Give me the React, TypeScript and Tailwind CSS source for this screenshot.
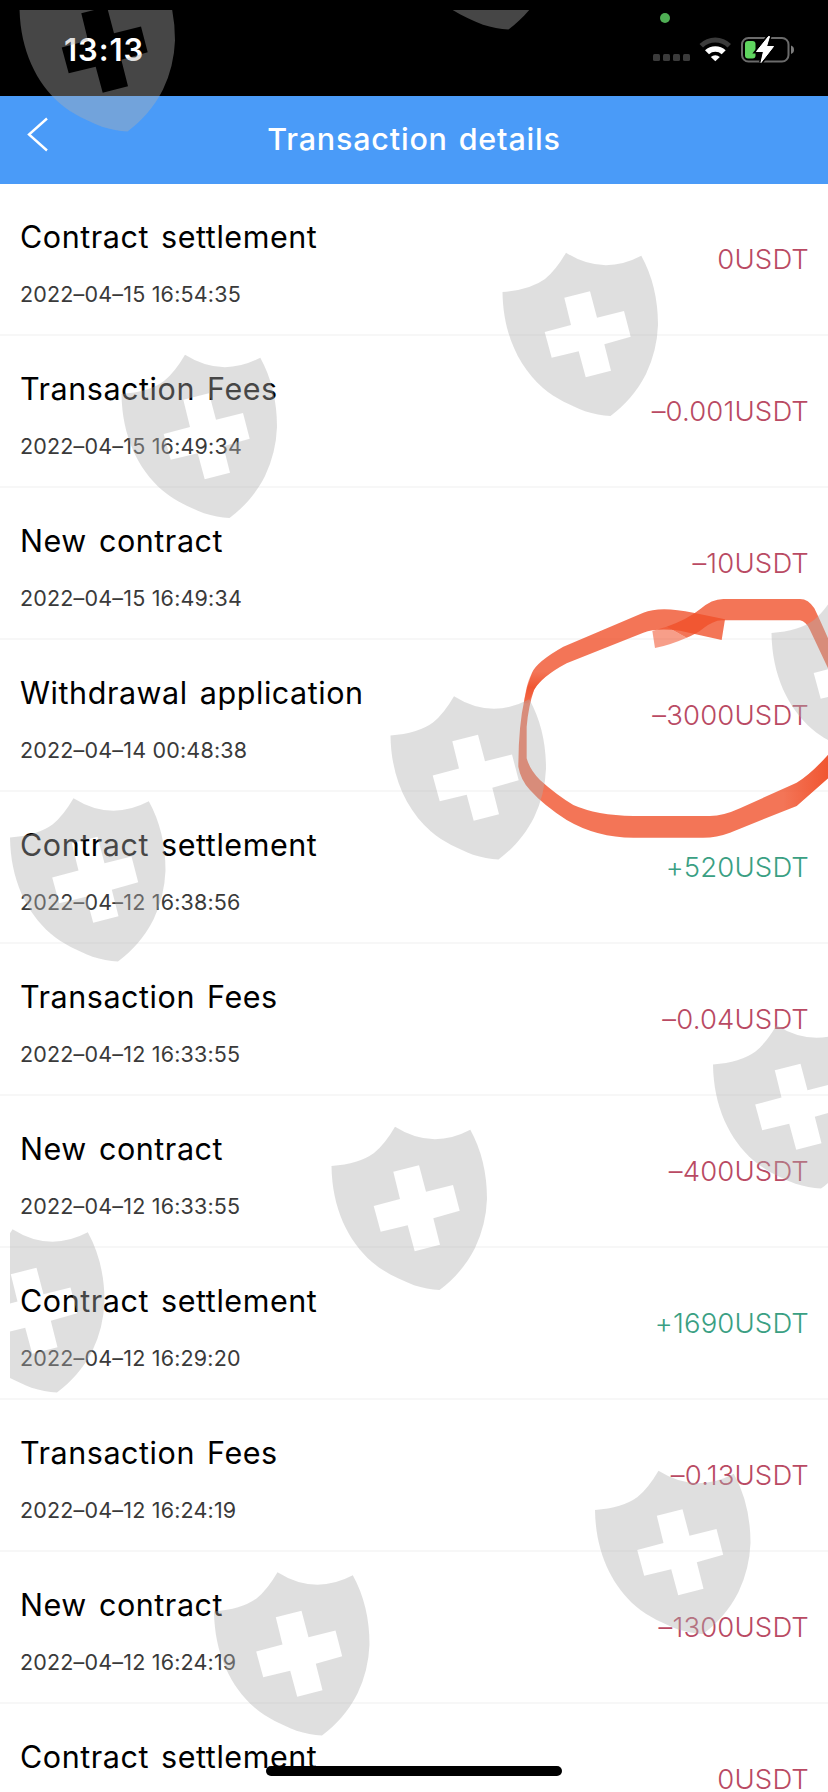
import clsx from "clsx";

interface Transaction {
  title: string;
  date?: string;
  amount: string;
}

const transactions: Transaction[] = [
  { title: "Contract settlement", date: "2022–04–15 16:54:35", amount: "0USDT" },
  { title: "Transaction Fees", date: "2022–04–15 16:49:34", amount: "–0.001USDT" },
  { title: "New contract", date: "2022–04–15 16:49:34", amount: "–10USDT" },
  { title: "Withdrawal application", date: "2022–04–14 00:48:38", amount: "–3000USDT" },
  { title: "Contract settlement", date: "2022–04–12 16:38:56", amount: "+520USDT" },
  { title: "Transaction Fees", date: "2022–04–12 16:33:55", amount: "–0.04USDT" },
  { title: "New contract", date: "2022–04–12 16:33:55", amount: "–400USDT" },
  { title: "Contract settlement", date: "2022–04–12 16:29:20", amount: "+1690USDT" },
  { title: "Transaction Fees", date: "2022–04–12 16:24:19", amount: "–0.13USDT" },
  { title: "New contract", date: "2022–04–12 16:24:19", amount: "–1300USDT" },
  { title: "Contract settlement", amount: "0USDT" },
];

const shields = [
  [19, -32.5],
  [400, -134.5],
  [502, 252],
  [121, 354],
  [771, 593],
  [390, 695.5],
  [9.5, 797.5],
  [712.5, 1024.5],
  [331, 1126],
  [-51.5, 1228.5],
  [594.5, 1470],
  [213.5, 1571.5],
];

function StatusBar() {
  return (
    <div className="flex h-24 shrink-0 items-start justify-between bg-black pl-16 pr-[34px]">
      <span className="mt-[32px] text-[31px] font-semibold leading-9 tracking-[0.9px] text-white">13:13</span>
      <svg className="h-24 w-[142px]" viewBox="652 0 142 96" fill="none">
        <circle cx="665" cy="18" r="5" fill="#4fae54" />
        <g fill="#3b3b3b">
          <rect x="653" y="54" width="7" height="7" rx="1.5" />
          <rect x="663" y="54" width="7" height="7" rx="1.5" />
          <rect x="673" y="54" width="7" height="7" rx="1.5" />
          <rect x="683" y="54" width="7" height="7" rx="1.5" />
        </g>
        <path d="M699.5 44L703 47.5A17.500 17.500 0 0 1 727.500 47.5L731 44A22.500 22.500 0 0 0 699.5 44Z" fill="#3b3b3b" />
        <path d="M705 50.300L709 54.200A9.500 9.500 0 0 1 721.700 54.200L725.700 50.300A15 15 0 0 0 705 50.300Z" fill="#fff" />
        <path d="M710.800 57A6.500 6.500 0 0 1 719.800 57L715.300 61.300Z" fill="#fff" />
        <rect x="742" y="38" width="46.500" height="23.500" rx="6.500" stroke="#6b6b6b" strokeWidth="2" />
        <path d="M791 45.500Q794 46.500 794 49.700T791 54Z" fill="#7c7c7c" />
        <rect x="745" y="41" width="10.500" height="17.500" rx="3" fill="#5fd55f" />
        <path d="M768.500 36.500L756.500 51.500H763.500L761 62.500L773.500 46.500H766.500L769.500 36.500Z" fill="#fff" stroke="#000" strokeWidth="4" paintOrder="stroke" />
        <path d="M768.500 36.500L756.500 51.500H763.500L761 62.500L773.500 46.500H766.500L769.500 36.500Z" fill="#fff" stroke="#fff" strokeWidth="1" strokeLinejoin="round" />
      </svg>
    </div>
  );
}

function NavBar() {
  return (
    <header className="grid h-[88px] shrink-0 grid-cols-[1fr_auto_1fr] items-center bg-[#4a9bf8] text-white">
      <svg className="ml-[26px] mb-[12px] h-9 w-6" viewBox="0 0 24 36" fill="none" stroke="currentColor" strokeWidth="2.4">
        <path d="M21 2.500L3 18.500L21 34.500" />
      </svg>
      <h1 className="mb-[2px] text-[30.500px] font-medium tracking-[0.8px] [word-spacing:2px]">Transaction details</h1>
    </header>
  );
}

function TransactionRow({ item }: { item: Transaction }) {
  return (
    <li className="flex h-[152px] shrink-0 items-center justify-between border-b-2 border-[#f7f7f7] pl-5 pr-[19px]">
      <div className="flex flex-col gap-[21px] pt-[6px]">
        <span className="text-[30.500px] leading-[42px] tracking-[0.550px] text-black [word-spacing:3px]">{item.title}</span>
        <span className="h-[30px] text-[21.500px] leading-[30px] tracking-[0.18px] text-[#3a3a3a]">{item.date}</span>
      </div>
      <span
        className={clsx(
          "pt-[2px] text-[27.500px] font-light leading-none tracking-[0.15px]",
          item.amount.startsWith("+") ? "text-[#3a9f83]" : "text-[#b94a63]"
        )}
      >
        {item.amount}
      </span>
    </li>
  );
}

function MarkerCircle() {
  return (
    <svg className="absolute left-[500px] top-[560px] h-[320px] w-[328px]" viewBox="0 0 984 960" fill="#f04e28">
      <defs>
        <linearGradient id="turn" x1="0" y1="335" x2="0" y2="430" gradientUnits="userSpaceOnUse">
          <stop offset="0" stopColor="#f04e28" stopOpacity="0" />
          <stop offset="0.5" stopColor="#f04e28" stopOpacity="0.8" />
          <stop offset="1" stopColor="#f04e28" stopOpacity="0.3" />
        </linearGradient>
        <linearGradient id="exit" x1="850" y1="0" x2="984" y2="0" gradientUnits="userSpaceOnUse">
          <stop offset="0" stopColor="#f04e28" stopOpacity="0" />
          <stop offset="1" stopColor="#f04e28" stopOpacity="0.8" />
        </linearGradient>
      </defs>
      <path
        fillOpacity="0.78"
        d="M675 178L580 158Q480 137 430 158L190 260Q110 305 96 338Q85 365 74 415Q55 500 55 620Q62 660 90 690Q130 735 200 780Q290 833 400 833H610Q650 833 690 818L890 738L984 655V585Q930 645 890 668L720 745Q670 768 630 768H400Q290 766 220 735Q170 705 120 660Q90 630 80 595V500Q85 440 102 390Q125 350 200 310L430 218Q470 203 540 212L665 240Z"
      />
      <path fillOpacity="0.78" d="M500 200Q560 180 600 148Q635 117 670 117H900Q925 117 943 145Q960 180 984 235V325L930 210Q918 184 900 181H665Q640 182 610 205Q590 222 560 233Z" />
      <path fillOpacity="0.55" d="M457 213L500 200L560 233Q510 255 465 264Z" />
      <path fill="url(#turn)" d="M96 338L165 330Q115 362 102 390L85 430H71Q82 360 96 338Z" />
      <path fill="url(#exit)" d="M850 688L890 668Q930 645 984 585V655L890 738L850 754Z" />
    </svg>
  );
}

function ShieldPattern() {
  return (
    <svg className="pointer-events-none absolute left-[10px] top-[10px] h-[1782px] w-[818px]" viewBox="10 10 818 1782" fill="#afafaf" fillOpacity="0.4">
      {shields.map(([x, y]) => (
        <path
          key={`${x},${y}`}
          transform={`translate(${x} ${y})`}
          fillRule="evenodd"
          d="M0.500 40Q28 38 43 27Q54 18 64 0.700Q101 24 139.300 3.700Q156 34 156 73Q155 99 144 122C135 140 122 154 108.500 164Q96 163.500 83 159.300C68 153 54 147 41 136C17 115 1 82 0.500 40ZM62.300 45.700L69 73L42.700 80L49.700 105.700L76.700 99.300L83.700 125.300L109 118.700L102.300 92.300L128.700 84.700L122 59L95 65.700L88 39.300Z"
        />
      ))}
    </svg>
  );
}

export default function App() {
  return (
    <main className="relative flex h-[1792px] w-[828px] flex-col overflow-hidden bg-white font-['Inter','Noto_Sans_CJK_SC',sans-serif]">
      <StatusBar />
      <NavBar />
      <ul className="flex min-h-0 flex-1 flex-col overflow-hidden">
        {transactions.map((item, i) => (
          <TransactionRow key={i} item={item} />
        ))}
      </ul>
      <MarkerCircle />
      <ShieldPattern />
      <div className="absolute bottom-4 left-[266px] h-[10px] w-[296px] rounded-full bg-black" />
    </main>
  );
}
